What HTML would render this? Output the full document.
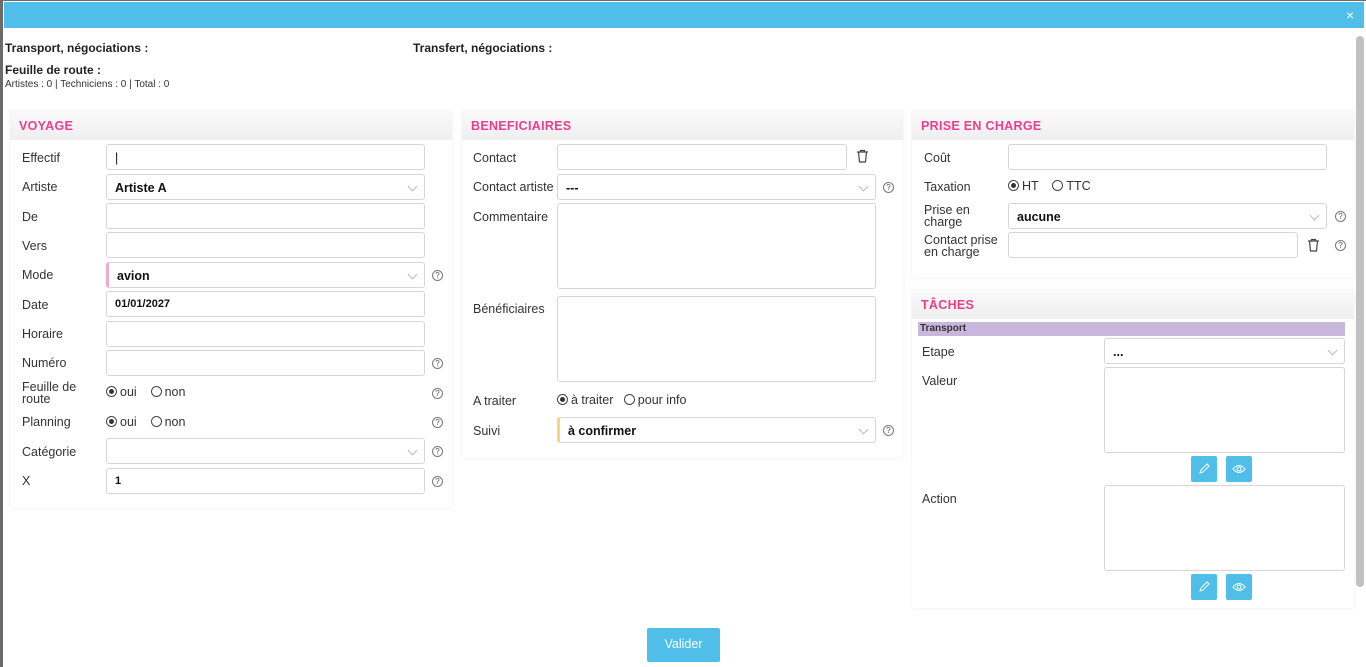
<!DOCTYPE html>
<html><head><meta charset="utf-8"><style>
*{box-sizing:border-box;margin:0;padding:0}
body{width:1366px;height:667px;overflow:hidden;background:#6b6b6b;font-family:"Liberation Sans",sans-serif;color:#333;position:relative}
.a{position:absolute}
.modal{left:3px;top:1px;width:1363px;height:666px;background:#fff}
.hdr{left:4px;top:2px;width:1360px;height:26px;background:#4fbfea}
.panel{background:#fff;box-shadow:0 0 3px rgba(0,0,0,.08)}
.ph{background:linear-gradient(#fafafa,#efefef);height:29px;color:#ee3d8f;font-weight:bold;font-size:12.5px;padding:8px 0 0 9px;letter-spacing:.3px}
.lbl{font-size:12.5px;color:#333;line-height:12px}
.in{border:1px solid #d6d6d6;border-radius:3px;background:#fff;height:26px;font-size:12.5px;font-weight:bold;padding:6px 8px;color:#111}
.chev{position:absolute;right:8px;top:8px;width:7px;height:7px;border-right:1px solid #bbb;border-bottom:1px solid #bbb;transform:rotate(45deg)}
.q{width:11px;height:11px;border:1px solid #777;border-radius:50%;font-size:8px;line-height:9px;text-align:center;color:#555}
.rd{width:11px;height:11px;border:1px solid #444;border-radius:50%;display:inline-block;vertical-align:-1px;margin-right:3px;position:relative}
.rd.on:after{content:"";position:absolute;left:2px;top:2px;width:5px;height:5px;border-radius:50%;background:#333}
.btn{background:#4fbfea;border-radius:2px}
.tt{font-size:12px;font-weight:bold;color:#222}
</style></head><body>
<div class="a modal"></div>
<div class="a hdr"></div>
<div class="a" style="left:1346px;top:7px;color:#fff;font-size:14px">×</div>
<div class="a" style="left:1356px;top:36px;width:8px;height:551px;background:#c1c1c1;border-radius:4px"></div>
<div class="a tt" style="left:5px;top:41px">Transport, négociations :</div>
<div class="a tt" style="left:413px;top:41px">Transfert, négociations :</div>
<div class="a tt" style="left:5px;top:63px">Feuille de route :</div>
<div class="a" style="left:5px;top:79px;font-size:10px;color:#333">Artistes : 0 | Techniciens : 0 | Total : 0</div>

<!-- VOYAGE -->
<div class="a panel" style="left:10px;top:111px;width:442px;height:397px"><div class="ph">VOYAGE</div></div>
<div class="a lbl" style="left:22px;top:152px">Effectif</div><div class="a in" style="left:106px;top:144px;width:319px;font-weight:normal">|</div>
<div class="a lbl" style="left:22px;top:181px">Artiste</div><div class="a in" style="left:106px;top:174px;width:319px">Artiste A<i class="chev"></i></div>
<div class="a lbl" style="left:22px;top:211px">De</div><div class="a in" style="left:106px;top:203px;width:319px"></div>
<div class="a lbl" style="left:22px;top:240px">Vers</div><div class="a in" style="left:106px;top:232px;width:319px"></div>
<div class="a lbl" style="left:22px;top:269px">Mode</div><div class="a in" style="left:106px;top:262px;width:319px;border-left:3px solid #f2a8c8">avion<i class="chev"></i></div><div class="a q" style="left:432px;top:270px">?</div>
<div class="a lbl" style="left:22px;top:299px">Date</div><div class="a in" style="left:106px;top:291px;width:319px;font-size:11px">01/01/2027</div>
<div class="a lbl" style="left:22px;top:328px">Horaire</div><div class="a in" style="left:106px;top:321px;width:319px"></div>
<div class="a lbl" style="left:22px;top:357px">Numéro</div><div class="a in" style="left:106px;top:350px;width:319px"></div><div class="a q" style="left:432px;top:358px">?</div>
<div class="a lbl" style="left:22px;top:381px">Feuille de<br>route</div><div class="a lbl" style="left:106px;top:386px"><span class="rd on"></span>oui &nbsp;&nbsp;&nbsp;<span class="rd"></span>non</div><div class="a q" style="left:432px;top:388px">?</div>
<div class="a lbl" style="left:22px;top:416px">Planning</div><div class="a lbl" style="left:106px;top:416px"><span class="rd on"></span>oui &nbsp;&nbsp;&nbsp;<span class="rd"></span>non</div><div class="a q" style="left:432px;top:417px">?</div>
<div class="a lbl" style="left:22px;top:446px">Catégorie</div><div class="a in" style="left:106px;top:438px;width:319px"><i class="chev"></i></div><div class="a q" style="left:432px;top:446px">?</div>
<div class="a lbl" style="left:22px;top:475px">X</div><div class="a in" style="left:106px;top:468px;width:319px;font-size:11px">1</div><div class="a q" style="left:432px;top:476px">?</div>

<!-- BENEF -->
<div class="a panel" style="left:462px;top:111px;width:441px;height:347px"><div class="ph">BENEFICIAIRES</div></div>
<div class="a lbl" style="left:473px;top:152px">Contact</div><div class="a in" style="left:557px;top:144px;width:290px"></div>
<svg class="a" style="left:856px;top:149px" width="13" height="14" viewBox="0 0 13 14" fill="none" stroke="#444" stroke-width="1.2"><path d="M1 3h11M4.5 3V1.5h4V3M2.5 3l1 10h6l1-10"/></svg>
<div class="a lbl" style="left:473px;top:181px">Contact artiste</div><div class="a in" style="left:557px;top:174px;width:319px">---<i class="chev"></i></div><div class="a q" style="left:883px;top:182px">?</div>
<div class="a lbl" style="left:473px;top:211px">Commentaire</div><div class="a in" style="left:557px;top:203px;width:319px;height:86px"></div>
<div class="a lbl" style="left:473px;top:303px">Bénéficiaires</div><div class="a in" style="left:557px;top:296px;width:319px;height:86px"></div>
<div class="a lbl" style="left:473px;top:395px">A traiter</div><div class="a lbl" style="left:557px;top:394px"><span class="rd on"></span>à traiter &nbsp;&nbsp;<span class="rd"></span>pour info</div>
<div class="a lbl" style="left:473px;top:425px">Suivi</div><div class="a in" style="left:557px;top:417px;width:319px;border-left:3px solid #f7d77a">à confirmer<i class="chev"></i></div><div class="a q" style="left:883px;top:425px">?</div>

<!-- PRISE -->
<div class="a panel" style="left:912px;top:111px;width:442px;height:167px"><div class="ph">PRISE EN CHARGE</div></div>
<div class="a lbl" style="left:924px;top:152px">Coût</div><div class="a in" style="left:1008px;top:144px;width:319px"></div>
<div class="a lbl" style="left:924px;top:181px">Taxation</div><div class="a lbl" style="left:1008px;top:180px"><span class="rd on"></span>HT &nbsp;&nbsp;&nbsp;<span class="rd"></span>TTC</div>
<div class="a lbl" style="left:924px;top:204px">Prise en<br>charge</div><div class="a in" style="left:1008px;top:203px;width:319px">aucune<i class="chev"></i></div><div class="a q" style="left:1335px;top:211px">?</div>
<div class="a lbl" style="left:924px;top:234px">Contact prise<br>en charge</div><div class="a in" style="left:1008px;top:232px;width:290px"></div>
<svg class="a" style="left:1307px;top:238px" width="13" height="14" viewBox="0 0 13 14" fill="none" stroke="#444" stroke-width="1.2"><path d="M1 3h11M4.5 3V1.5h4V3M2.5 3l1 10h6l1-10"/></svg><div class="a q" style="left:1335px;top:240px">?</div>

<!-- TACHES -->
<div class="a panel" style="left:912px;top:290px;width:442px;height:318px"><div class="ph">TÂCHES</div></div>
<div class="a" style="left:918px;top:322px;width:427px;height:14px;background:#c9b6dd;font-size:10px;font-weight:bold;padding:1px 2px;color:#333">Transport</div>
<div class="a lbl" style="left:922px;top:346px">Etape</div><div class="a in" style="left:1104px;top:338px;width:241px">...<i class="chev"></i></div>
<div class="a lbl" style="left:922px;top:375px">Valeur</div><div class="a in" style="left:1104px;top:367px;width:241px;height:86px"></div>
<div class="a btn" style="left:1191px;top:456px;width:26px;height:26px"></div><div class="a btn" style="left:1226px;top:456px;width:26px;height:26px"></div>
<div class="a lbl" style="left:922px;top:493px">Action</div><div class="a in" style="left:1104px;top:485px;width:241px;height:86px"></div>
<div class="a btn" style="left:1191px;top:574px;width:26px;height:26px"></div><div class="a btn" style="left:1226px;top:574px;width:26px;height:26px"></div>
<svg class="a" style="left:1198px;top:463px" width="12" height="12" viewBox="0 0 12 12" fill="none" stroke="#fff"><path d="M2 10l1-3 6-6 2 2-6 6z"/></svg>
<svg class="a" style="left:1232px;top:464px" width="14" height="10" viewBox="0 0 14 10" fill="none" stroke="#fff"><path d="M1 5q6-7 12 0q-6 7-12 0z"/><circle cx="7" cy="5" r="2"/></svg>
<svg class="a" style="left:1198px;top:581px" width="12" height="12" viewBox="0 0 12 12" fill="none" stroke="#fff"><path d="M2 10l1-3 6-6 2 2-6 6z"/></svg>
<svg class="a" style="left:1232px;top:582px" width="14" height="10" viewBox="0 0 14 10" fill="none" stroke="#fff"><path d="M1 5q6-7 12 0q-6 7-12 0z"/><circle cx="7" cy="5" r="2"/></svg>

<div class="a btn" style="left:647px;top:628px;width:73px;height:34px;color:#fff;font-size:12.5px;text-align:center;line-height:32px">Valider</div>
</body></html>
